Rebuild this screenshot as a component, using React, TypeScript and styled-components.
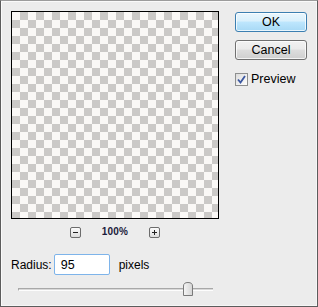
import React from "react";
import styled, { createGlobalStyle } from "styled-components";

const Global = createGlobalStyle`
  html, body { margin: 0; padding: 0; background: #ececec; }
  body { font-family: "Liberation Sans", Arial, sans-serif; }
`;

const Dialog = styled.div`
  box-sizing: border-box;
  width: 318px;
  height: 307px;
  background: #ececec;
  border: 1px solid #5c5c5c;
  border-top-color: #9c9c9c;
  box-shadow: inset 1px 1px 0 #fafafa, inset -1px -1px 0 #f6f6f6;
  padding: 10px 11px 0 10px;
  display: flex;
  flex-direction: column;
  font-size: 12px;
  color: #000;
`;

const Top = styled.div`
  display: flex;
  align-items: flex-start;
`;

const PreviewColumn = styled.div`
  display: flex;
  flex-direction: column;
  width: 208px;
`;

const Canvas = styled.div`
  box-sizing: border-box;
  width: 208px;
  height: 208px;
  border: 1px solid #000;
  background: repeating-conic-gradient(#cbc9c7 0 25%, #faf8f6 0 50%) 0 0 / 16px 16px;
`;

const ZoomRow = styled.div`
  display: flex;
  align-items: center;
  justify-content: center;
  gap: 21px;
  margin-top: 7px;
  height: 12px;
`;

const ZoomButton = styled.div`
  box-sizing: border-box;
  width: 11px;
  height: 11px;
  border: 1px solid #6c6c6c;
  border-radius: 2px;
  background: linear-gradient(#fbfbfb, #dcdcdc);
  display: flex;
  align-items: center;
  justify-content: center;
`;

const ZoomLabel = styled.span`
  font-size: 10px;
  font-weight: bold;
  color: #1a1a3a;
  letter-spacing: 0.2px;
  line-height: 12px;
`;

const Buttons = styled.div`
  display: flex;
  flex-direction: column;
  margin-left: 16px;
  margin-top: 1px;
  width: 72px;
`;

const Button = styled.div<{ $default?: boolean }>`
  box-sizing: border-box;
  width: 72px;
  height: 20px;
  border-radius: 3px;
  border: 1px solid ${(p) => (p.$default ? "#3c7fb1" : "#707070")};
  background: ${(p) =>
    p.$default
      ? "linear-gradient(#eaf6fd 0%, #d9f0fc 45%, #bee6fd 50%, #a7d9f5 100%)"
      : "linear-gradient(#f2f2f2 0%, #ebebeb 45%, #dddddd 50%, #cfcfcf 100%)"};
  box-shadow: inset 0 0 0 1px rgba(255, 255, 255, 0.75);
  display: flex;
  align-items: center;
  justify-content: center;
  font-size: 12.5px;
  margin-bottom: ${(p) => (p.$default ? "8px" : "0")};
`;

const CheckRow = styled.label`
  display: flex;
  align-items: center;
  gap: 3px;
  margin-top: 12px;
  font-size: 12.5px;
`;

const Box = styled.span`
  box-sizing: border-box;
  width: 13px;
  height: 13px;
  border: 1px solid #8e8f8f;
  background: linear-gradient(135deg, #dcdcdc, #fefefe);
  display: flex;
  align-items: center;
  justify-content: center;
`;

const RadiusRow = styled.div`
  display: flex;
  align-items: center;
  margin-top: 16px;
  height: 21px;
  font-size: 12px;
`;

const Field = styled.div`
  box-sizing: border-box;
  width: 56px;
  height: 21px;
  margin-left: 2px;
  border: 1px solid #7eb4ea;
  border-radius: 2px;
  background: #fff;
  padding-left: 6px;
  display: flex;
  align-items: center;
  font-size: 12.5px;
`;

const Unit = styled.span`
  margin-left: 9px;
`;

const SliderRow = styled.div`
  position: relative;
  margin-top: 7px;
  margin-left: 7px;
  width: 195px;
  height: 14px;
`;

const Track = styled.div`
  position: absolute;
  left: 0;
  right: 0;
  top: 6px;
  height: 1px;
  border-top: 1px solid #a8a8a8;
  border-bottom: 1px solid #fdfdfd;
  border-left: 1px solid #a8a8a8;
  background: #d8d8d8;
`;

const Thumb = styled.svg`
  position: absolute;
  top: 0;
`;

export default function App() {
  return (
    <>
      <Global />
      <Dialog>
        <Top>
          <PreviewColumn>
            <Canvas />
            <ZoomRow>
              <ZoomButton>
                <svg width="5" height="1" viewBox="0 0 5 1">
                  <rect width="5" height="1" fill="#222" />
                </svg>
              </ZoomButton>
              <ZoomLabel>100%</ZoomLabel>
              <ZoomButton>
                <svg width="5" height="5" viewBox="0 0 5 5">
                  <rect y="2" width="5" height="1" fill="#222" />
                  <rect x="2" width="1" height="5" fill="#222" />
                </svg>
              </ZoomButton>
            </ZoomRow>
          </PreviewColumn>
          <Buttons>
            <Button $default>OK</Button>
            <Button>Cancel</Button>
            <CheckRow>
              <Box>
                <svg width="9" height="9" viewBox="0 0 9 9">
                  <path d="M1 4.5 L3.5 7.5 L8 1" fill="none" stroke="#3b57a0" strokeWidth="1.8" />
                </svg>
              </Box>
              Preview
            </CheckRow>
          </Buttons>
        </Top>
        <RadiusRow>
          Radius:
          <Field>95</Field>
          <Unit>pixels</Unit>
        </RadiusRow>
        <SliderRow>
          <Track />
          <Thumb width="10" height="14" viewBox="0 0 10 14" style={{ left: "165px" }}>
            <defs>
              <linearGradient id="tg" x1="0" y1="0" x2="1" y2="0">
                <stop offset="0" stopColor="#f6f6f6" />
                <stop offset="1" stopColor="#d4d4d4" />
              </linearGradient>
            </defs>
            <path d="M0.5 13.5 V4 Q0.5 0.5 5 0.5 Q9.5 0.5 9.5 4 V13.5 Z" fill="url(#tg)" stroke="#7a7a7a" />
          </Thumb>
        </SliderRow>
      </Dialog>
    </>
  );
}
